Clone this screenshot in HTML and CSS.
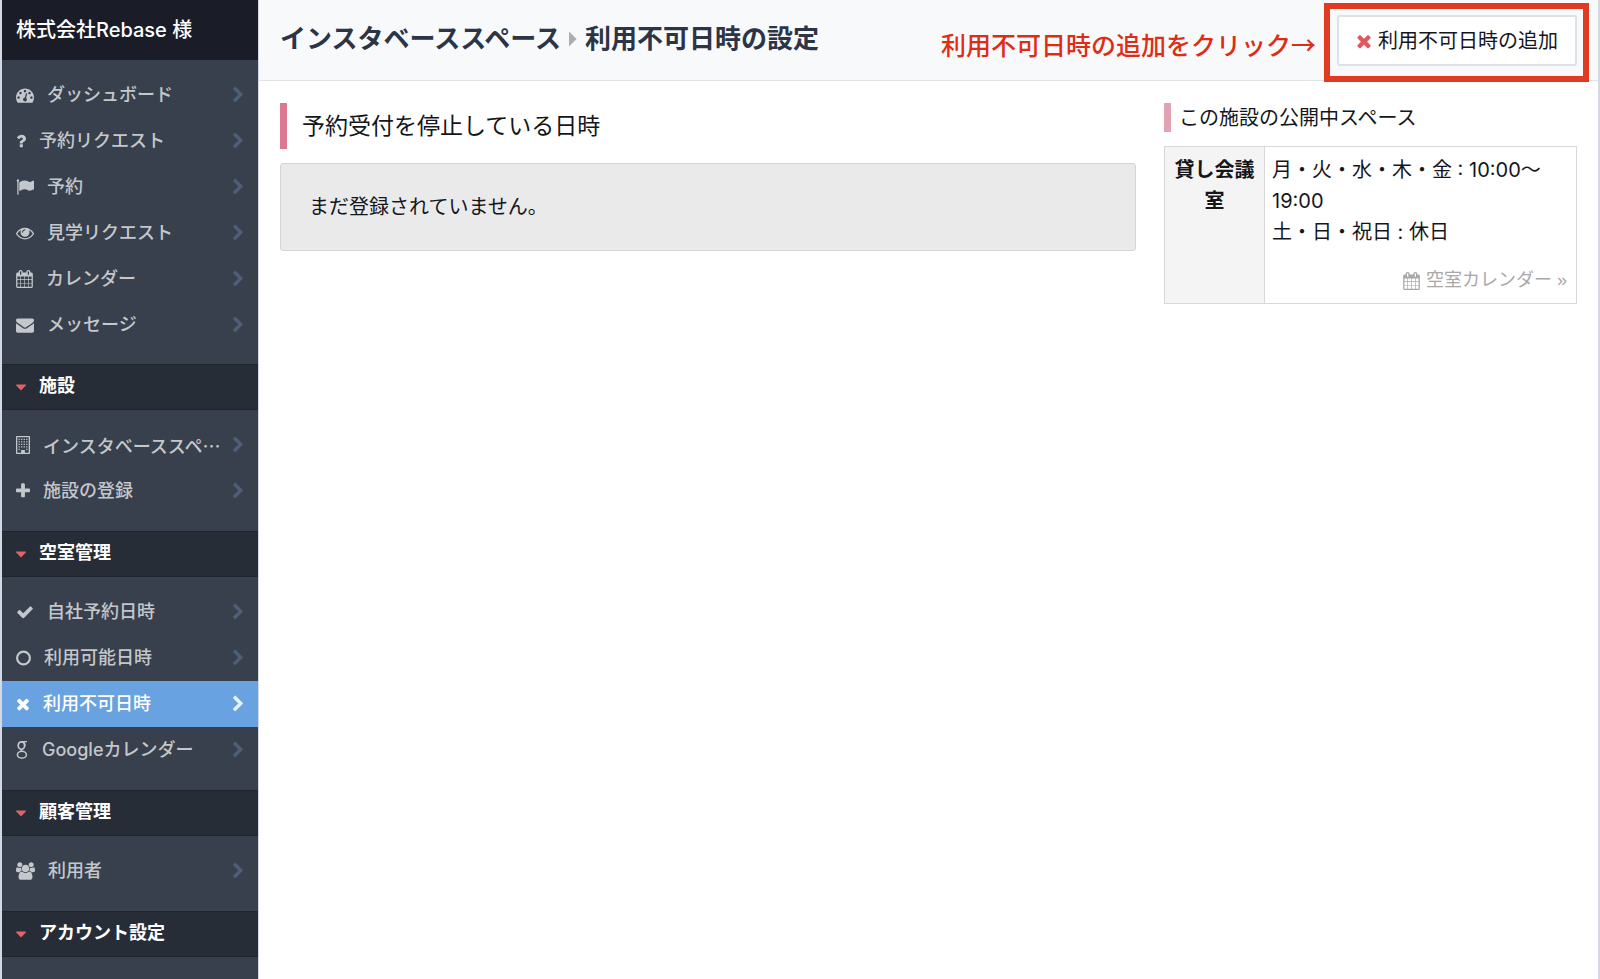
FILE: index.html
```html
<!DOCTYPE html>
<html lang="ja">
<head>
<meta charset="utf-8">
<meta name="viewport" content="width=device-width, initial-scale=1">
<title>利用不可日時の設定</title>
<link rel="stylesheet" href="styles.css">
</head>
<body>
<svg class="sprite" aria-hidden="true">
  <symbol id="chevron" viewBox="346 0 1036 1792"><path d="M1363 877l-742 742q-19 19-45 19t-45-19l-166-166q-19-19-19-45t19-45l531-531-531-531q-19-19-19-45t19-45l166-166q19-19 45-19t45 19l742 742q19 19 19 45t-19 45z"/></symbol>
  <symbol id="caret" viewBox="384 0 1024 1792"><path d="M1408 704q0 26-19 45l-448 448q-19 19-45 19t-45-19l-448-448q-19-19-19-45t19-45 45-19h896q26 0 45 19t19 45z"/></symbol>
  <symbol id="times" viewBox="192 0 1408 1792"><path d="M1490 1322q0 40-28 68l-136 136q-28 28-68 28t-68-28l-294-294-294 294q-28 28-68 28t-68-28l-136-136q-28-28-28-68t28-68l294-294-294-294q-28-28-28-68t28-68l136-136q28-28 68-28t68 28l294 294 294-294q28-28 68-28t68 28l136 136q28 28 28 68t-28 68l-294 294 294 294q28 28 28 68z"/></symbol>
  <symbol id="calendar" viewBox="64 0 1664 1792"><path d="M192 1664h288v-288h-288v288zm352 0h320v-288h-320v288zm-352-352h288v-320h-288v320zm352 0h320v-320h-320v320zm-352-384h288v-288h-288v288zm736 736h320v-288h-320v288zm-384-736h320v-288h-320v288zm768 736h288v-288h-288v288zm-384-352h320v-320h-320v320zm-352-864v-288q0-13-9.5-22.5t-22.5-9.5h-64q-13 0-22.5 9.5t-9.5 22.5v288q0 13 9.5 22.5t22.5 9.5h64q13 0 22.5-9.5t9.5-22.5zm736 864h288v-320h-288v320zm-384-384h320v-288h-320v288zm384 0h288v-288h-288v288zm32-480v-288q0-13-9.5-22.5t-22.5-9.5h-64q-13 0-22.5 9.5t-9.5 22.5v288q0 13 9.5 22.5t22.5 9.5h64q13 0 22.5-9.5t9.5-22.5zm384-64v1280q0 52-38 90t-90 38h-1408q-52 0-90-38t-38-90v-1280q0-52 38-90t90-38h128v-96q0-66 47-113t113-47h64q66 0 113 47t47 113v96h384v-96q0-66 47-113t113-47h64q66 0 113 47t47 113v96h128q52 0 90 38t38 90z"/></symbol>
</svg>
<div class="page">
  <aside class="sidebar">
    <div class="account">株式会社Rebase 様</div>
    <nav>
      <ul class="menu">
        <li><a class="item" href="#"><svg class="icon w18" viewBox="0 0 1792 1792"><path d="M384 1152q0-53-37.5-90.5t-90.5-37.5-90.5 37.5-37.5 90.5 37.5 90.5 90.5 37.5 90.5-37.5 37.5-90.5zm192-448q0-53-37.5-90.5t-90.5-37.5-90.5 37.5-37.5 90.5 37.5 90.5 90.5 37.5 90.5-37.5 37.5-90.5zm428 481l101-382q6-26-7.5-48.5t-38.5-29.5-48 6.5-30 39.5l-101 382q-60 5-107 43.5t-63 98.5q-20 77 20 146t117 89 146-20 89-117q16-60-6-117t-72-91zm660-33q0-53-37.5-90.5t-90.5-37.5-90.5 37.5-37.5 90.5 37.5 90.5 90.5 37.5 90.5-37.5 37.5-90.5zm-640-640q0-53-37.5-90.5t-90.5-37.5-90.5 37.5-37.5 90.5 37.5 90.5 90.5 37.5 90.5-37.5 37.5-90.5zm448 192q0-53-37.5-90.5t-90.5-37.5-90.5 37.5-37.5 90.5 37.5 90.5 90.5 37.5 90.5-37.5 37.5-90.5zm320 448q0 261-141 483-19 29-54 29h-1402q-35 0-54-29-141-221-141-483 0-182 71-348t191-286 286-191 348-71 348 71 286 191 191 286 71 348z"/></svg><span class="label">ダッシュボード</span><svg class="chevron"><use href="#chevron"/></svg></a></li>
        <li><a class="item" href="#"><svg class="icon w10" viewBox="384 0 1024 1792"><path d="M1088 1256v240q0 16-12 28t-28 12h-240q-16 0-28-12t-12-28v-240q0-16 12-28t28-12h240q16 0 28 12t12 28zm316-600q0 54-15.5 101t-35 76.5-55 59.5-57.5 43.5-61 35.5q-41 23-68.5 65t-27.5 67q0 17-12 32.5t-28 15.5h-240q-15 0-25.5-18.5t-10.5-37.5v-45q0-83 65-156.5t143-108.5q59-27 84-56t25-76q0-42-46.5-74t-107.5-32q-65 0-108 29-35 25-107 115-13 16-31 16-12 0-25-8l-164-125q-13-10-15.5-25t5.5-28q160-266 464-266 80 0 161 31t146 83 106 127.5 41 158.5z"/></svg><span class="label">予約リクエスト</span><svg class="chevron"><use href="#chevron"/></svg></a></li>
        <li><a class="item" href="#"><svg class="icon w18" viewBox="0 0 1792 1792"><path d="M320 256q0 72-64 110v1266q0 13-9.5 22.5t-22.5 9.5h-64q-13 0-22.5-9.5t-9.5-22.5v-1266q-64-38-64-110 0-53 37.5-90.5t90.5-37.5 90.5 37.5 37.5 90.5zm1472 64v763q0 25-12.5 38.5t-39.5 27.5q-215 116-369 116-61 0-123.5-22t-108.5-48-115.5-48-142.5-22q-192 0-464 146-17 9-33 9-26 0-45-19t-19-45v-742q0-32 31-55 21-14 79-43 236-120 421-120 107 0 200 29t219 88q38 19 88 19 54 0 117.5-21t110-47 88-47 54.5-21q26 0 45 19t19 45z"/></svg><span class="label">予約</span><svg class="chevron"><use href="#chevron"/></svg></a></li>
        <li><a class="item" href="#"><svg class="icon w18" viewBox="0 0 1792 1792"><path d="M1664 960q-152-236-381-353 61 104 61 225 0 185-131.5 316.5t-316.5 131.5-316.5-131.5-131.5-316.5q0-121 61-225-229 117-381 353 133 205 333.5 326.5t434.5 121.5 434.5-121.5 333.5-326.5zm-720-384q0-20-14-34t-34-14q-125 0-214.5 89.5t-89.5 214.5q0 20 14 34t34 14 34-14 14-34q0-86 61-147t147-61q20 0 34-14t14-34zm848 384q0 34-20 69-140 230-376.5 368.5t-499.5 138.5-499.5-139-376.5-368q-20-35-20-69t20-69q140-229 376.5-368t499.5-139 499.5 139 376.5 368q20 35 20 69z"/></svg><span class="label">見学リクエスト</span><svg class="chevron"><use href="#chevron"/></svg></a></li>
        <li><a class="item" href="#"><svg class="icon w17"><use href="#calendar"/></svg><span class="label">カレンダー</span><svg class="chevron"><use href="#chevron"/></svg></a></li>
        <li><a class="item" href="#"><svg class="icon w18" viewBox="0 0 1792 1792"><path d="M1792 710v794q0 66-47 113t-113 47h-1472q-66 0-113-47t-47-113v-794q44 49 101 87 362 246 497 345 57 42 92.5 65.5t94.5 48 110 24.5h2q51 0 110-24.5t94.5-48 92.5-65.5q170-123 498-345 57-39 100-87zm0-294q0 79-49 151t-122 123q-376 261-468 325-10 7-42.5 31t-54 38.5-52 32.5-57.5 27-50 9h-2q-23 0-50-9t-57.5-27-52-32.5-54-38.5-42.5-31q-91-64-262-182.5t-205-142.5q-62-42-117-115.5t-55-136.5q0-78 41.5-130t118.5-52h1472q65 0 112.5 47t47.5 113z"/></svg><span class="label">メッセージ</span><svg class="chevron"><use href="#chevron"/></svg></a></li>
      </ul>
      <h2 class="section"><svg class="caret"><use href="#caret"/></svg><span>施設</span></h2>
      <ul class="menu">
        <li><a class="item" href="#"><svg class="icon w14" viewBox="0 0 1408 1792"><path fill-rule="evenodd" d="M64 0h1280q64 0 64 64v1664q0 64-64 64H64q-64 0-64-64V64Q0 0 64 0zM128 128v1536h384v-224q0-32 32-32h320q32 0 32 32v224h384V128z"/><path d="M256 256h128v128H256zm256 0h128v128H512zm256 0h128v128H768zm256 0h128v128h-128zM256 512h128v128H256zm256 0h128v128H512zm256 0h128v128H768zm256 0h128v128h-128zM256 768h128v128H256zm256 0h128v128H512zm256 0h128v128H768zm256 0h128v128h-128zM256 1024h128v128H256zm256 0h128v128H512zm256 0h128v128H768zm256 0h128v128h-128zM256 1280h128v128H256zm768 0h128v128h-128z"/></svg><span class="label label-cut">インスタベーススペ…</span><svg class="chevron"><use href="#chevron"/></svg></a></li>
        <li><a class="item" href="#"><svg class="icon w14" viewBox="192 0 1408 1792"><path d="M1600 736v192q0 40-28 68t-68 28h-416v416q0 40-28 68t-68 28h-192q-40 0-68-28t-28-68v-416h-416q-40 0-68-28t-28-68v-192q0-40 28-68t68-28h416v-416q0-40 28-68t68-28h192q40 0 68 28t28 68v416h416q40 0 68 28t28 68z"/></svg><span class="label">施設の登録</span><svg class="chevron"><use href="#chevron"/></svg></a></li>
      </ul>
      <h2 class="section"><svg class="caret"><use href="#caret"/></svg><span>空室管理</span></h2>
      <ul class="menu">
        <li><a class="item" href="#"><svg class="icon w18" viewBox="0 0 1792 1792"><path d="M1671 566q0 40-28 68l-724 724-136 136q-28 28-68 28t-68-28l-136-136-362-362q-28-28-28-68t28-68l136-136q28-28 68-28t68 28l294 295 656-657q28-28 68-28t68 28l136 136q28 28 28 68z"/></svg><span class="label">自社予約日時</span><svg class="chevron"><use href="#chevron"/></svg></a></li>
        <li><a class="item" href="#"><svg class="icon w15" viewBox="128 0 1536 1792"><circle cx="896" cy="896" r="656" fill="none" stroke="currentColor" stroke-width="224"/></svg><span class="label">利用可能日時</span><svg class="chevron"><use href="#chevron"/></svg></a></li>
        <li><a class="item item-active" href="#" aria-current="page"><svg class="icon w14"><use href="#times"/></svg><span class="label">利用不可日時</span><svg class="chevron"><use href="#chevron"/></svg></a></li>
        <li><a class="item" href="#"><svg class="icon w13" viewBox="0 0 13 18"><g fill="none" stroke="currentColor"><ellipse cx="5.4" cy="4.6" rx="3.2" ry="3.8" stroke-width="1.7"/><path d="M5.4.7H11M7.4 1.2Q9.4 2.4 8.8 5M6 8.2Q4.2 9.4 6 10.4" stroke-width="1.3"/><ellipse cx="5.9" cy="13.7" rx="4.5" ry="3.4" stroke-width="1.5"/></g></svg><span class="label">Googleカレンダー</span><svg class="chevron"><use href="#chevron"/></svg></a></li>
      </ul>
      <h2 class="section"><svg class="caret"><use href="#caret"/></svg><span>顧客管理</span></h2>
      <ul class="menu">
        <li><a class="item" href="#"><svg class="icon w19" viewBox="0 0 1920 1792"><path d="M593 896q-162 5-265 128h-134q-82 0-138-40.5t-56-118.5q0-353 124-353 6 0 43.5 21t97.5 42.5 119 21.5q67 0 133-23-5 37-5 66 0 139 81 256zm1071 637q0 120-73 189.5t-194 69.5h-874q-121 0-194-69.5t-73-189.5q0-53 3.5-103.5t14-109 26.5-108.5 43-97.5 62-81 85.5-53.5 111.5-20q10 0 43 21.5t73 48 107 48 135 21.5 135-21.5 107-48 73-48 43-21.5q61 0 111.5 20t85.5 53.5 62 81 43 97.5 26.5 108.5 14 109 3.5 103.5zm-1024-1277q0 106-75 181t-181 75-181-75-75-181 75-181 181-75 181 75 75 181zm704 384q0 159-112.5 271.5t-271.5 112.5-271.5-112.5-112.5-271.5 112.5-271.5 271.5-112.5 271.5 112.5 112.5 271.5zm576 225q0 78-56 118.5t-138 40.5h-134q-103-123-265-128 81-117 81-256 0-29-5-66 66 23 133 23 59 0 119-21.5t97.5-42.5 43.5-21q124 0 124 353zm-128-609q0 106-75 181t-181 75-181-75-75-181 75-181 181-75 181 75 75 181z"/></svg><span class="label">利用者</span><svg class="chevron"><use href="#chevron"/></svg></a></li>
      </ul>
      <h2 class="section"><svg class="caret"><use href="#caret"/></svg><span>アカウント設定</span></h2>
    </nav>
  </aside>
  <div class="main">
    <header class="topbar">
      <h1 class="crumbs"><span>インスタベーススペース</span><svg class="crumb-arrow" viewBox="0 0 8 16"><path d="M0 .6L7.6 8 0 15.4z"/></svg><span>利用不可日時の設定</span></h1>
      <p class="hint">利用不可日時の追加をクリック→</p>
      <div class="callout">
        <button class="add" type="button"><svg class="add-icon"><use href="#times"/></svg><span>利用不可日時の追加</span></button>
      </div>
    </header>
    <main class="content">
      <section>
        <h2 class="title">予約受付を停止している日時</h2>
        <p class="empty">まだ登録されていません。</p>
      </section>
      <section>
        <h3 class="subtitle">この施設の公開中スペース</h3>
        <table class="spaces">
          <tr>
            <th scope="row">貸し会議室</th>
            <td>
              <div>月・火・水・木・金 : 10:00〜19:00</div>
              <div>土・日・祝日 : 休日</div>
              <a class="vacancy" href="#"><svg class="icon w17"><use href="#calendar"/></svg><span>空室カレンダー »</span></a>
            </td>
          </tr>
        </table>
      </section>
    </main>
  </div>
</div>
</body>
</html>
```
FILE: styles.css
```css
* {
  box-sizing: border-box;
}

body,
h1,
h2,
h3,
p,
ul {
  margin: 0;
  padding: 0;
}

body {
  background: #d3d8e2;
  color: #14161c;
  font-family: "Liberation Sans", "Noto Sans CJK JP", sans-serif;
  font-size: 20px;
}

ul {
  list-style: none;
}

svg {
  display: block;
  flex: none;
  fill: currentColor;
}

.sprite {
  position: absolute;
  width: 0;
  height: 0;
}

.page {
  display: grid;
  grid-template-columns: 256px minmax(0, 1fr);
  column-gap: 1px;
  min-height: 100vh;
  padding: 0 2px;
}

/* Sidebar */

.sidebar {
  background: #37404c;
  font-family: Inter, "Noto Sans CJK JP", sans-serif;
}

.account {
  height: 60px;
  padding: 0 14px;
  background: #1a1d27;
  color: #fff;
  font-size: 20px;
  font-weight: 500;
  line-height: 60px;
}

.menu {
  padding: 12px 0 17px;
}

.menu:first-child {
  padding-bottom: 16px;
}

.item {
  display: flex;
  align-items: center;
  height: 46px;
  padding: 0 15px 0 14px;
  color: #c4c7cb;
  font-size: 18px;
  font-weight: 500;
  line-height: 46px;
  text-decoration: none;
  white-space: nowrap;
}

.item-active {
  background: #68a2e0;
  color: #fff;
}

.icon {
  height: 18px;
}

.w10 { width: 10px; }
.w13 { width: 13px; }
.w14 { width: 14px; }
.w15 { width: 15px; }
.w17 { width: 17px; }
.w18 { width: 18px; }
.w19 { width: 19px; }

.label {
  flex: 1;
  min-width: 0;
  padding-left: 13px;
}

.label-cut {
  font-family: "Noto Sans CJK JP", sans-serif;
}

.chevron {
  width: 10px;
  height: 18px;
  color: #4d5f78;
}

.item-active .chevron {
  color: #e9f2fc;
}

.section {
  display: flex;
  align-items: center;
  gap: 13px;
  height: 46px;
  padding: 0 14px;
  border: solid #20252d;
  border-width: 1px 0;
  background: #272d37;
  color: #fff;
  font-size: 18px;
  font-weight: 700;
  line-height: 24px;
}

.section span {
  padding-bottom: 2px;
}

.caret {
  width: 10px;
  height: 18px;
  color: #e0636a;
}

/* Top bar */

.main {
  background: #fff;
}

.topbar {
  display: flex;
  align-items: flex-start;
  height: 81px;
  padding: 3px 9px 0 21px;
  border-bottom: 1px solid #e1e2e4;
  background: #f8f9fb;
}

.crumbs {
  display: flex;
  flex: 1;
  align-items: center;
  color: #2b3547;
  font-size: 26px;
  font-weight: 700;
  line-height: 72px;
  white-space: nowrap;
}

.crumb-arrow {
  width: 8px;
  height: 16px;
  margin: 0 8px;
  color: #adadad;
}

.hint {
  margin-right: 8px;
  color: #df2c14;
  font-family: "Noto Sans CJK JP", sans-serif;
  font-size: 25px;
  font-weight: 500;
  line-height: 82px;
  white-space: nowrap;
}

.callout {
  height: 79px;
  padding: 6px 6px 6px 7px;
  border: 6px solid #e23a20;
}

.add {
  display: flex;
  align-items: center;
  gap: 6px;
  height: 51px;
  padding: 0 17px;
  border: 2px solid #dfe1e4;
  border-radius: 3px;
  background: #fff;
  color: #14161c;
  font: inherit;
  white-space: nowrap;
}

.add span {
  padding-bottom: 3px;
}

.add-icon {
  width: 16px;
  height: 20px;
  color: #e0595d;
}

/* Content */

.content {
  display: grid;
  grid-template-columns: minmax(0, 1fr) 413px;
  gap: 28px;
  padding: 22px 21px;
}

.title {
  padding-left: 15px;
  border-left: 7px solid #dc7891;
  font-size: 23px;
  font-weight: 400;
  line-height: 46px;
}

.empty {
  margin-top: 14px;
  padding: 28px;
  border: 1px solid #d5d5d5;
  border-radius: 3px;
  background: #eaeaea;
  line-height: 30px;
}

.subtitle {
  padding: 2px 0 0 8px;
  border-left: 7px solid #e2a2b2;
  font-size: 20px;
  font-weight: 400;
  line-height: 27px;
}

.spaces {
  width: 100%;
  margin-top: 14px;
  border-collapse: collapse;
  table-layout: fixed;
  line-height: 31px;
}

.spaces th,
.spaces td {
  padding: 8px 7px;
  border: 1px solid #d8d8d8;
  vertical-align: top;
}

.spaces th {
  width: 100px;
  background: #f4f4f4;
  text-align: center;
}

.spaces td {
  padding-bottom: 7px;
  font-family: Inter, "Noto Sans CJK JP", sans-serif;
}

.vacancy {
  display: flex;
  align-items: center;
  justify-content: flex-end;
  gap: 6px;
  margin-top: 17px;
  padding-right: 2px;
  color: #a8a8a8;
  font-family: "Liberation Sans", "Noto Sans CJK JP", sans-serif;
  font-size: 18px;
  text-decoration: none;
}
```
